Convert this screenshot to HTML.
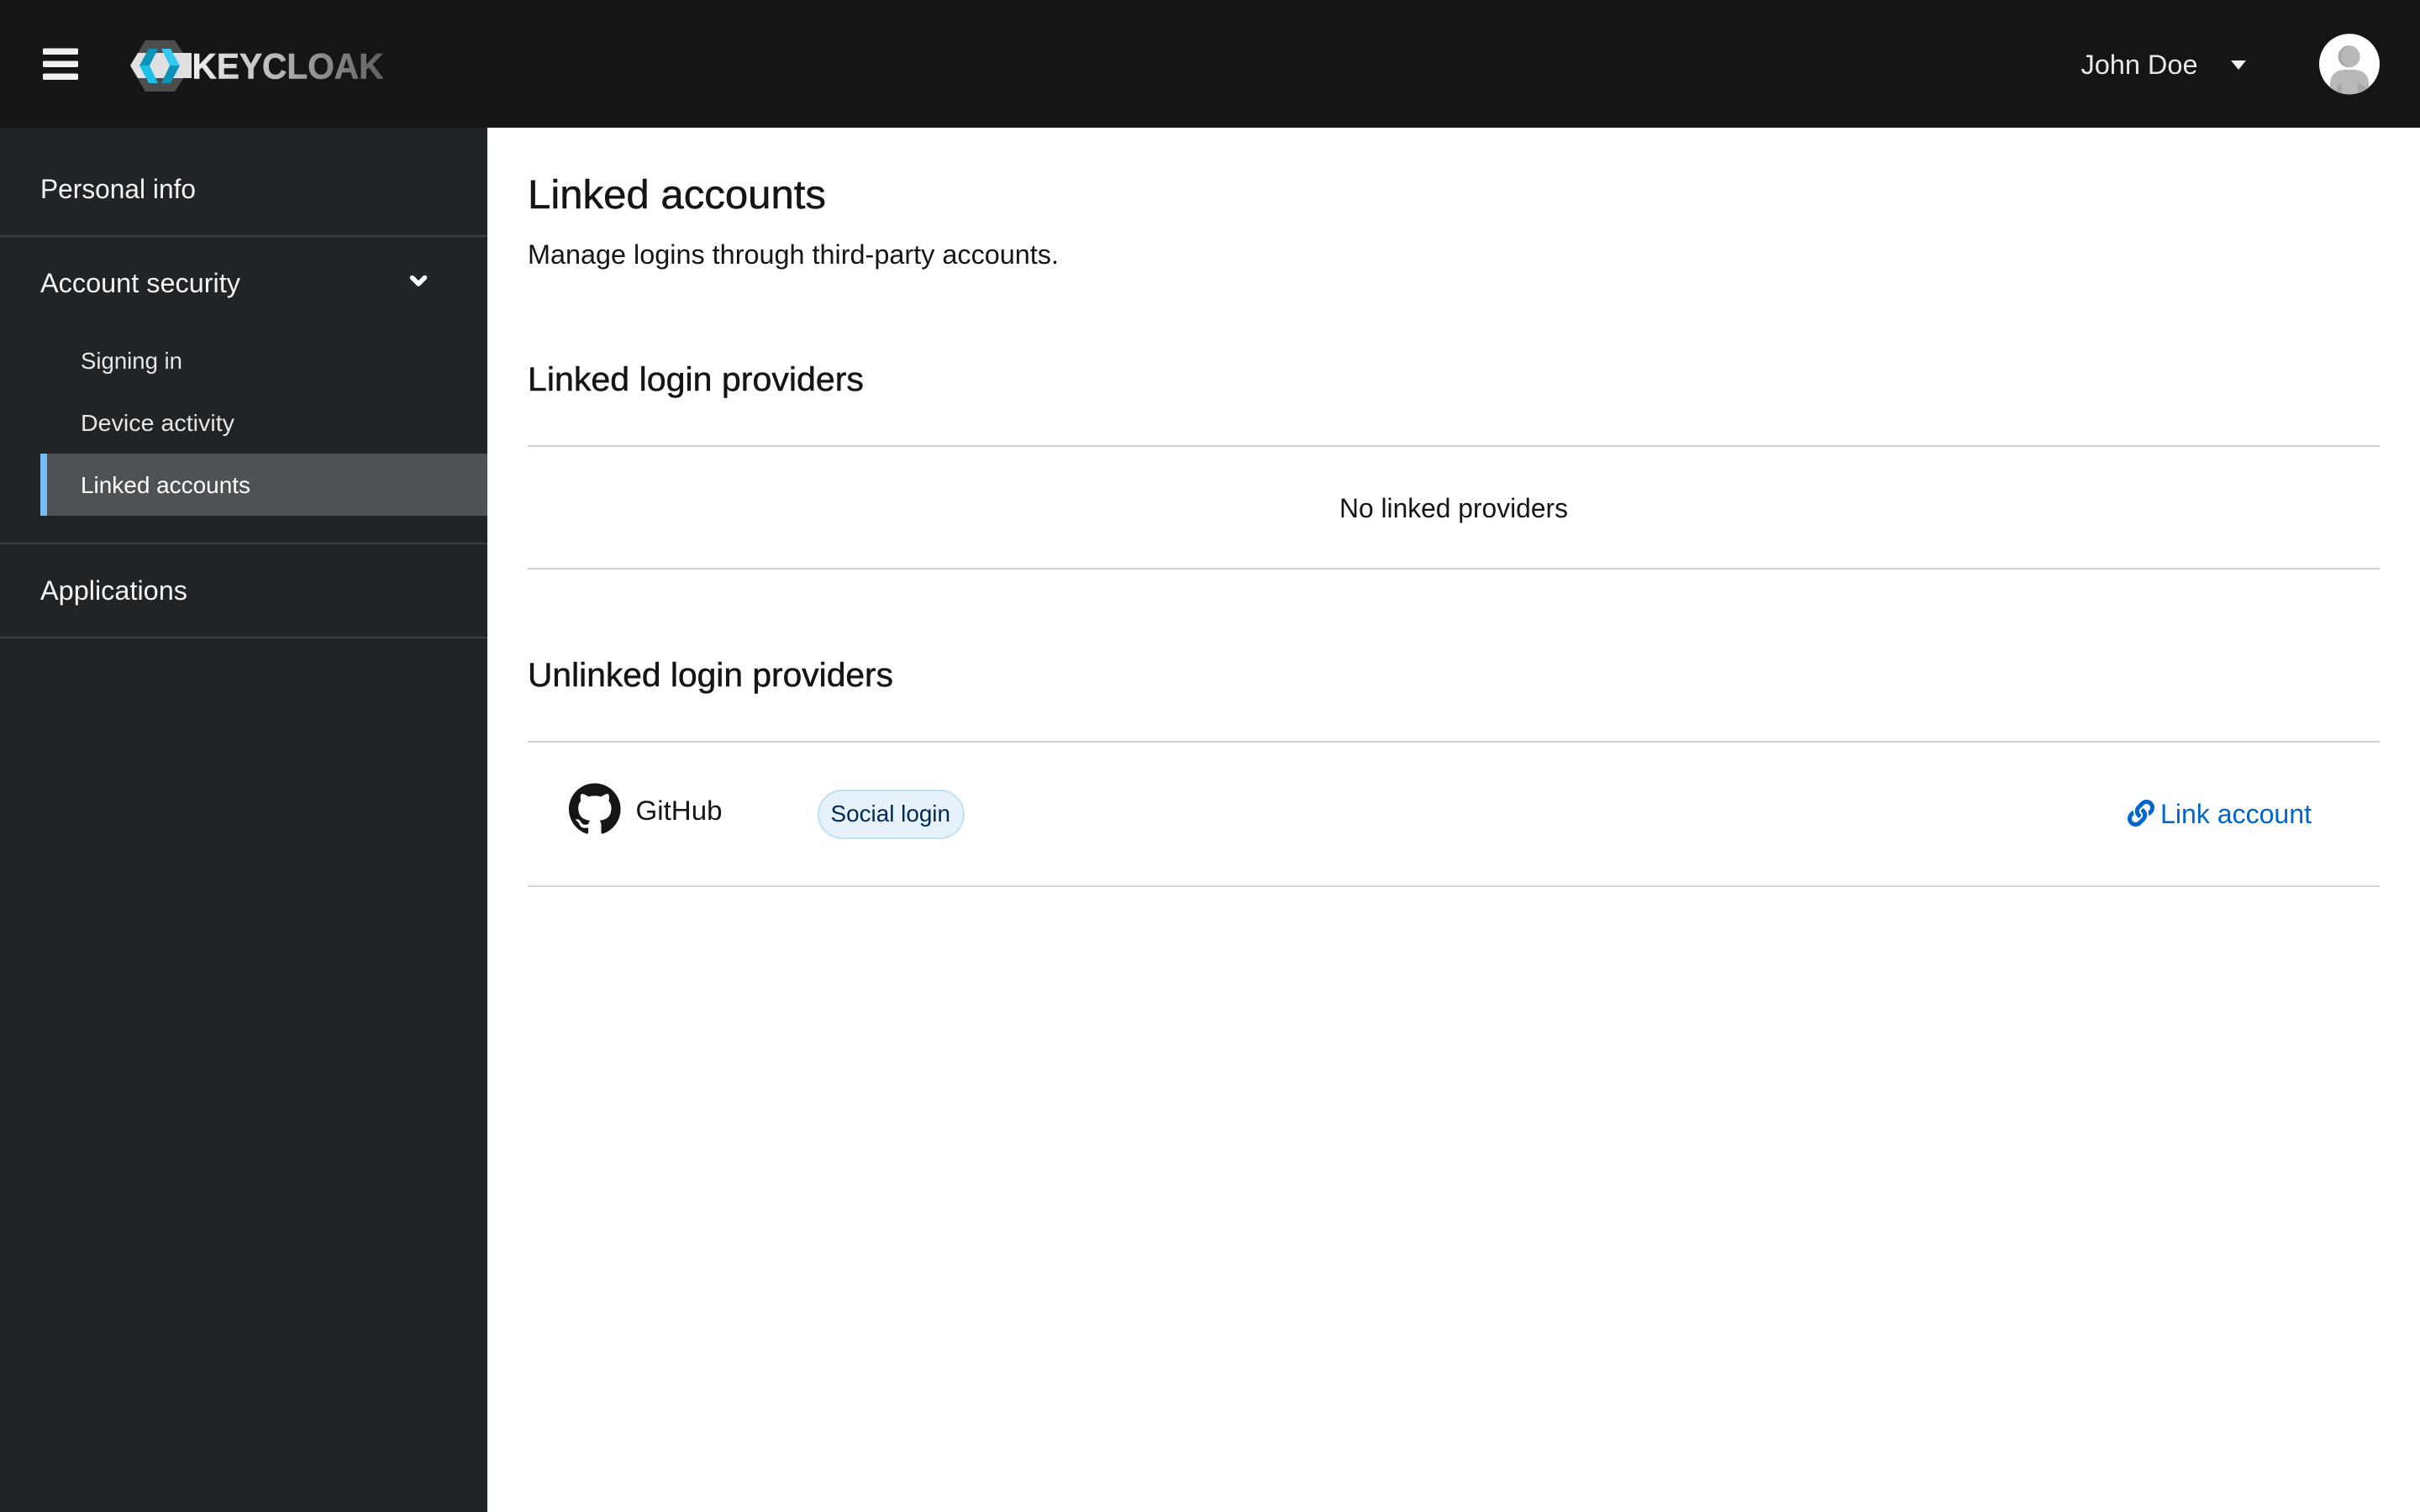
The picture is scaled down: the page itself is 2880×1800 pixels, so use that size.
<!DOCTYPE html>
<html lang="en">
<head>
<meta charset="utf-8">
<title>Linked accounts</title>
<style>
html,body{margin:0;padding:0;width:2880px;height:1800px;overflow:hidden;background:#fff}
svg{display:block}
text{font-family:"Liberation Sans",sans-serif;white-space:pre}
.nav{fill:#f4f4f4;font-size:32px}
.sub{fill:#e6e6e6;font-size:28px}
.h{fill:#151515;stroke:#151515;stroke-width:.5px}
.b{fill:#151515;font-size:32px}
</style>
</head>
<body>
<svg xmlns="http://www.w3.org/2000/svg" width="2880" height="1800" viewBox="0 0 2880 1800">
<defs>
<linearGradient id="kc" gradientUnits="userSpaceOnUse" x1="232" y1="0" x2="456" y2="0">
<stop offset="0" stop-color="#ececec"/><stop offset=".35" stop-color="#c4c4c4"/><stop offset=".7" stop-color="#8a8a8a"/><stop offset="1" stop-color="#606060"/>
</linearGradient>
<clipPath id="av"><circle cx="2796" cy="76.5" r="36"/></clipPath>
<clipPath id="hd"><circle cx="2795.5" cy="67.3" r="13"/></clipPath>
</defs>

<!-- header -->
<rect x="0" y="0" width="2880" height="152" fill="#151515"/>
<rect x="51" y="57.5" width="42" height="7.5" rx="1.5" fill="#f0f0f0"/>
<rect x="51" y="72.5" width="42" height="7.5" rx="1.5" fill="#f0f0f0"/>
<rect x="51" y="87.5" width="42" height="7.5" rx="1.5" fill="#f0f0f0"/>

<!-- logo -->
<polygon points="173,48 208,48 228,78.5 208,109 173,109 155,78.5" fill="#4d4d4d"/>
<polygon points="155,78 164,63 228,63 228,93 164,93" fill="#e0e0e0"/>
<polygon points="166,78 177,58 188,58 178,78" fill="#0b93bb"/>
<polygon points="166,78 178,78 188,99 177,99" fill="#1dbfe9"/>
<polygon points="192,58 203,58 214,78 202,78" fill="#35c9ef"/>
<polygon points="202,78 214,78 203,99 192,99" fill="#0b93bb"/>
<text x="228.5" y="93.5" font-size="43" font-weight="700" fill="url(#kc)" stroke="url(#kc)" stroke-width=".6" textLength="228" lengthAdjust="spacingAndGlyphs">KEYCLOAK</text>

<!-- user -->
<text x="2476.5" y="88" font-size="32" fill="#e8e8e8" textLength="139" lengthAdjust="spacingAndGlyphs">John Doe</text>
<polygon points="2655,72 2673,72 2664,83" fill="#f0f0f0"/>
<circle cx="2796" cy="76.2" r="36" fill="#fff"/>
<g clip-path="url(#av)">
<circle cx="2795.5" cy="67.3" r="13" fill="#a9a9a9"/>
<circle cx="2799.5" cy="67.3" r="13" fill="#b9b9b9" clip-path="url(#hd)"/>
<path d="M2773,115 V100 C2773,90 2780,83 2790,83 H2802 C2812,83 2819,90 2819,100 V115 Z" fill="#b9b9b9"/>
<path d="M2781,115 V104 Q2783,100 2787,99 V115 Z" fill="#a6a6a6"/>
<path d="M2806,115 V99 Q2813,100 2816,105 V115 Z" fill="#a6a6a6"/>
</g>

<!-- sidebar -->
<rect x="0" y="152" width="580" height="1648" fill="#212427"/>
<rect x="0" y="280" width="580" height="2" fill="#3c3f42"/>
<rect x="0" y="646" width="580" height="2" fill="#3c3f42"/>
<rect x="0" y="758" width="580" height="2" fill="#3c3f42"/>
<rect x="48" y="540" width="532" height="74" fill="#4f5255"/>
<rect x="48" y="540" width="8" height="74" fill="#73bcf7"/>
<text class="nav" x="48" y="236" textLength="185" lengthAdjust="spacingAndGlyphs">Personal info</text>
<text class="nav" x="48" y="348" textLength="238" lengthAdjust="spacingAndGlyphs">Account security</text>
<polyline points="490.5,330.5 498,338 505.5,330.5" fill="none" stroke="#fff" stroke-width="5.5" stroke-linecap="round" stroke-linejoin="round"/>
<text class="sub" x="96" y="439" textLength="121" lengthAdjust="spacingAndGlyphs">Signing in</text>
<text class="sub" x="96" y="513" textLength="183" lengthAdjust="spacingAndGlyphs">Device activity</text>
<text class="sub" x="96" y="587" textLength="202" style="fill:#fff" lengthAdjust="spacingAndGlyphs">Linked accounts</text>
<text class="nav" x="48" y="714" textLength="175" lengthAdjust="spacingAndGlyphs">Applications</text>

<!-- main -->
<text class="h" x="628" y="248" font-size="48" textLength="355" lengthAdjust="spacingAndGlyphs">Linked accounts</text>
<text class="b" x="628" y="314" textLength="632" lengthAdjust="spacingAndGlyphs">Manage logins through third-party accounts.</text>
<text class="h" x="628" y="465" font-size="40" textLength="400" lengthAdjust="spacingAndGlyphs">Linked login providers</text>
<rect x="628" y="530" width="2204" height="2" fill="#d2d2d2"/>
<text class="b" x="1594" y="616" textLength="272" lengthAdjust="spacingAndGlyphs">No linked providers</text>
<rect x="628" y="676" width="2204" height="2" fill="#d2d2d2"/>
<text class="h" x="628" y="817" font-size="40" textLength="435" lengthAdjust="spacingAndGlyphs">Unlinked login providers</text>
<rect x="628" y="882" width="2204" height="2" fill="#d2d2d2"/>

<g transform="translate(677 932.5) scale(3.85)">
<path fill="#151515" d="M8 0C3.58 0 0 3.58 0 8c0 3.54 2.29 6.53 5.47 7.59.4.07.55-.17.55-.38 0-.19-.01-.82-.01-1.49-2.01.37-2.53-.49-2.69-.94-.09-.23-.48-.94-.82-1.13-.28-.15-.68-.52-.01-.53.63-.01 1.08.58 1.23.82.72 1.21 1.87.87 2.33.66.07-.52.28-.87.51-1.07-1.78-.2-3.64-.89-3.64-3.95 0-.87.31-1.59.82-2.15-.08-.2-.36-1.02.08-2.12 0 0 .67-.21 2.2.82.64-.18 1.32-.27 2-.27.68 0 1.36.09 2 .27 1.53-1.04 2.2-.82 2.2-.82.44 1.1.16 1.92.08 2.12.51.56.82 1.27.82 2.15 0 3.07-1.87 3.75-3.65 3.95.29.25.54.73.54 1.48 0 1.07-.01 1.93-.01 2.2 0 .21.15.46.55.38A8.013 8.013 0 0016 8c0-4.42-3.58-8-8-8z"/>
</g>
<text class="b" x="756.5" y="976" textLength="103" lengthAdjust="spacingAndGlyphs">GitHub</text>
<rect x="974" y="941" width="173" height="57" rx="28.5" fill="#e7f1fa" stroke="#bee1f4" stroke-width="2"/>
<text x="988.5" y="978" font-size="28" fill="#002952" textLength="142.5" lengthAdjust="spacingAndGlyphs">Social login</text>

<g transform="translate(2532 952) scale(.0625)">
<path fill="#0066cc" d="M326.612 185.391c59.747 59.809 58.927 155.698.36 214.59-.11.12-.24.25-.36.37l-67.2 67.2c-59.27 59.27-155.699 59.262-214.96 0-59.27-59.26-59.27-155.7 0-214.96l37.106-37.106c9.84-9.84 26.786-3.3 27.294 10.606.648 17.722 3.826 35.527 9.69 52.721 1.986 5.822.567 12.262-3.783 16.612l-13.087 13.087c-28.026 28.026-28.905 73.66-1.155 101.96 28.024 28.579 74.086 28.749 102.325.51l67.2-67.19c28.191-28.191 28.073-73.757 0-101.83-3.701-3.694-7.429-6.564-10.341-8.569a16.037 16.037 0 0 1-6.947-12.606c-.396-10.567 3.348-21.456 11.698-29.806l21.054-21.055c5.521-5.521 14.182-6.199 20.584-1.731a152.482 152.482 0 0 1 20.522 17.197zM467.547 44.449c-59.261-59.262-155.69-59.27-214.96 0l-67.2 67.2c-.12.12-.25.25-.36.37-58.566 58.892-59.387 154.781.36 214.59a152.454 152.454 0 0 0 20.521 17.196c6.402 4.468 15.064 3.789 20.584-1.731l21.054-21.055c8.35-8.35 12.094-19.239 11.698-29.806a16.037 16.037 0 0 0-6.947-12.606c-2.912-2.005-6.64-4.875-10.341-8.569-28.073-28.073-28.191-73.639 0-101.83l67.2-67.19c28.239-28.239 74.3-28.069 102.325.51 27.75 28.3 26.872 73.934-1.155 101.96l-13.087 13.087c-4.35 4.35-5.769 10.79-3.783 16.612 5.864 17.194 9.042 34.999 9.69 52.721.509 13.906 17.454 20.446 27.294 10.606l37.106-37.106c59.271-59.259 59.271-155.699.001-214.959z"/>
</g>
<text x="2571" y="980" font-size="32" fill="#0066cc" textLength="180" lengthAdjust="spacingAndGlyphs">Link account</text>
<rect x="628" y="1054" width="2204" height="2" fill="#d2d2d2"/>
</svg>
</body>
</html>
